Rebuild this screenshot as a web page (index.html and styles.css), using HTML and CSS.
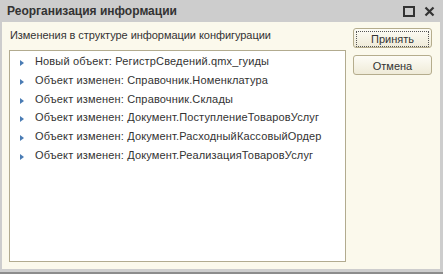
FILE: index.html
```html
<!DOCTYPE html>
<html lang="ru">
<head>
    <meta charset="UTF-8">
    <title>Реорганизация информации</title>
    <link rel="stylesheet" href="styles.css">
</head>
<body>
    <div class="okno">
        <div class="zagolovok">
            <span class="nazvanie">Реорганизация информации</span>
            <span class="knopki-okna">
                <svg width="12" height="11" viewBox="0 0 12 11"><rect x="1" y="1" width="10" height="9" fill="none" stroke="#333" stroke-width="2"/></svg>
                <svg width="11" height="11" viewBox="0 0 11 11"><path d="M1.5 1.5 L9.5 9.5 M9.5 1.5 L1.5 9.5" stroke="#333" stroke-width="2.2"/></svg>
            </span>
        </div>
        <div class="soderzhimoe">
            <div class="levaya">
                <div class="podpis">Изменения в структуре информации конфигурации</div>
                <div class="spisok">
                    <div class="stroka"><span class="treug"></span>Новый объект: РегистрСведений.qmx_гуиды</div>
                    <div class="stroka"><span class="treug"></span>Объект изменен: Справочник.Номенклатура</div>
                    <div class="stroka"><span class="treug"></span>Объект изменен: Справочник.Склады</div>
                    <div class="stroka"><span class="treug"></span>Объект изменен: Документ.ПоступлениеТоваровУслуг</div>
                    <div class="stroka"><span class="treug"></span>Объект изменен: Документ.РасходныйКассовыйОрдер</div>
                    <div class="stroka"><span class="treug"></span>Объект изменен: Документ.РеализацияТоваровУслуг</div>
                </div>
            </div>
            <div class="pravaya">
                <button class="knopka osnovnaya"><span>Принять</span></button>
                <button class="knopka"><span>Отмена</span></button>
            </div>
        </div>
    </div>
</body>
</html>
```

FILE: styles.css
```css
body {
    margin: 0;
    font-family: Arial, "Liberation Sans", sans-serif;
    font-size: 11px;
    color: #333;
}
.okno {
    width: 443px;
    height: 274px;
    box-sizing: border-box;
    background-color: #cdcdcd;
    border-bottom: 2px solid #8c8c8c;
    padding: 0 3px 3px 2px;
    display: flex;
    flex-direction: column;
}
.zagolovok {
    height: 22px;
    display: flex;
    align-items: center;
    justify-content: space-between;
    padding-left: 5px;
}
.nazvanie {
    font-weight: bold;
    font-size: 12px;
    color: #333;
}
.knopki-okna {
    display: flex;
    gap: 9px;
    padding-right: 5px;
    padding-top: 1px;
}
.soderzhimoe {
    flex: 1;
    background-color: #fbf9ec;
    display: flex;
    padding: 6px 8px 7px 7px;
    gap: 7px;
}
.levaya {
    flex: 1;
    display: flex;
    flex-direction: column;
}
.podpis {
    height: 22px;
    line-height: 15px;
    padding-left: 1px;
    letter-spacing: -0.05px;
}
.spisok {
    flex: 1;
    background-color: white;
    border: 1px solid #b2ab8f;
    padding-top: 1px;
}
.stroka {
    height: 18.8px;
    line-height: 19px;
    padding-left: 10px;
    white-space: nowrap;
    letter-spacing: 0.15px;
}
.treug {
    display: inline-block;
    width: 0;
    height: 0;
    border-top: 3.5px solid transparent;
    border-bottom: 3.5px solid transparent;
    border-left: 4px solid #4a7cb4;
    margin-right: 11px;
    vertical-align: -1px;
}
.pravaya {
    width: 79px;
    display: flex;
    flex-direction: column;
    gap: 7px;
}
.knopka {
    height: 20px;
    padding: 2px;
    border: 1px solid #b5ad8d;
    border-radius: 3px;
    background: linear-gradient(#fdfcf6, #efebd8);
    font-family: Arial, "Liberation Sans", sans-serif;
    font-size: 11px;
    color: #333;
}
.knopka span {
    display: block;
    height: 14px;
    line-height: 14px;
    border: 1px dotted transparent;
}
.osnovnaya span {
    border-color: #555;
}
```
